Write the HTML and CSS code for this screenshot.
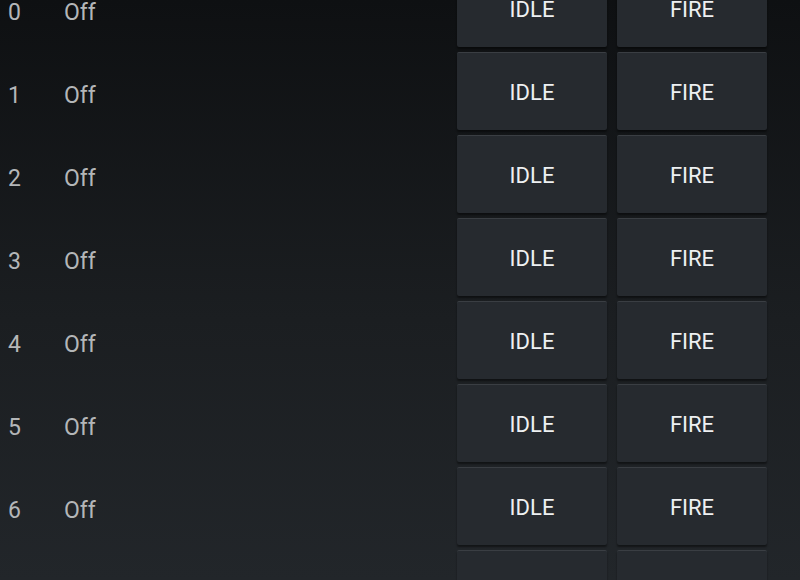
FILE: index.html
```html
<!DOCTYPE html>
<html>
<head>
<meta charset="utf-8">
<link rel="stylesheet" href="styles.css">
</head>
<body>
<div class="list">
  <div class="row"><span class="num">0</span><span class="state">Off</span><div class="btns"><button class="btn">IDLE</button><button class="btn">FIRE</button></div></div>
  <div class="row"><span class="num">1</span><span class="state">Off</span><div class="btns"><button class="btn">IDLE</button><button class="btn">FIRE</button></div></div>
  <div class="row"><span class="num">2</span><span class="state">Off</span><div class="btns"><button class="btn">IDLE</button><button class="btn">FIRE</button></div></div>
  <div class="row"><span class="num">3</span><span class="state">Off</span><div class="btns"><button class="btn">IDLE</button><button class="btn">FIRE</button></div></div>
  <div class="row"><span class="num">4</span><span class="state">Off</span><div class="btns"><button class="btn">IDLE</button><button class="btn">FIRE</button></div></div>
  <div class="row"><span class="num">5</span><span class="state">Off</span><div class="btns"><button class="btn">IDLE</button><button class="btn">FIRE</button></div></div>
  <div class="row"><span class="num">6</span><span class="state">Off</span><div class="btns"><button class="btn">IDLE</button><button class="btn">FIRE</button></div></div>
  <div class="row"><span class="num">7</span><span class="state">Off</span><div class="btns"><button class="btn">IDLE</button><button class="btn">FIRE</button></div></div>
</div>
</body>
</html>
```
FILE: styles.css
```css
html, body {
  margin: 0;
  padding: 0;
  height: 100%;
  overflow: hidden;
}
body {
  background: linear-gradient(180deg, #0e1012 0%, #1b1e21 55%, #22262a 100%);
  font-family: Roboto, "Noto Sans", sans-serif;
}
.list {
  display: flex;
  flex-direction: column;
  margin-top: -34px;
}
.row {
  display: flex;
  align-items: center;
  height: 83px;
}
.num {
  width: 56px;
  padding-left: 8px;
  padding-top: 10px;
  font-size: 23px;
  color: #b4b6b8;
}
.state {
  width: 393px;
  padding-top: 10px;
  font-size: 23px;
  color: #b4b6b8;
}
.btns {
  display: flex;
  gap: 10px;
}
.btn {
  width: 150px;
  height: 78px;
  border: none;
  border-top: 1px solid #3a3e43;
  border-radius: 2px;
  background: #262a2f;
  box-shadow: 0 2px 2px rgba(0,0,0,0.45);
  color: #eef0f2;
  font-family: Roboto, "Noto Sans", sans-serif;
  font-size: 22px;
  padding: 2px 0 0;
}
```
